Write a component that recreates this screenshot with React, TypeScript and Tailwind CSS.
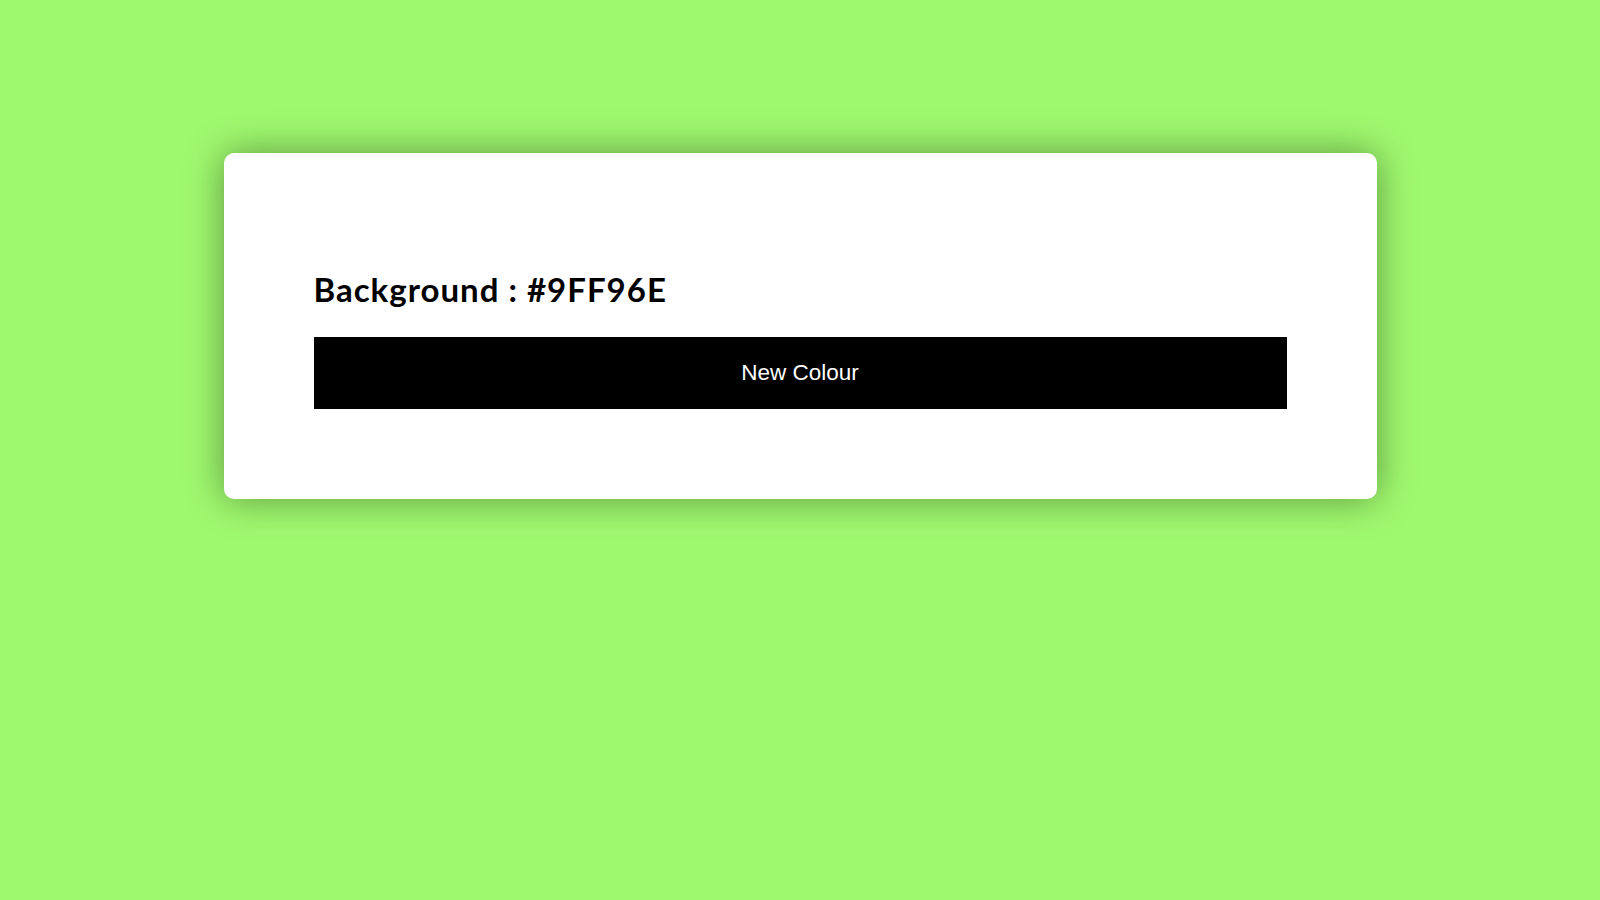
export default function App() {
  const colour = "#9FF96E";

  return (
    <div className="min-h-screen w-full bg-[#9FF96E] pt-[153px]">
      <div className="mx-auto w-[1153px] rounded-[10px] bg-white px-[90px] pt-[116px] pb-[90px] shadow-[0_0_38px_rgba(0,0,0,0.4)]">
        <h1 className="mb-[28px] font-['Lato',sans-serif] text-[33px] font-bold leading-[40px] tracking-[1px] text-black">
          Background : {colour}
        </h1>
        <button className="h-[72px] w-full bg-black font-['Liberation_Sans',Arial,sans-serif] text-[22.5px] text-white">
          New Colour
        </button>
      </div>
    </div>
  );
}
